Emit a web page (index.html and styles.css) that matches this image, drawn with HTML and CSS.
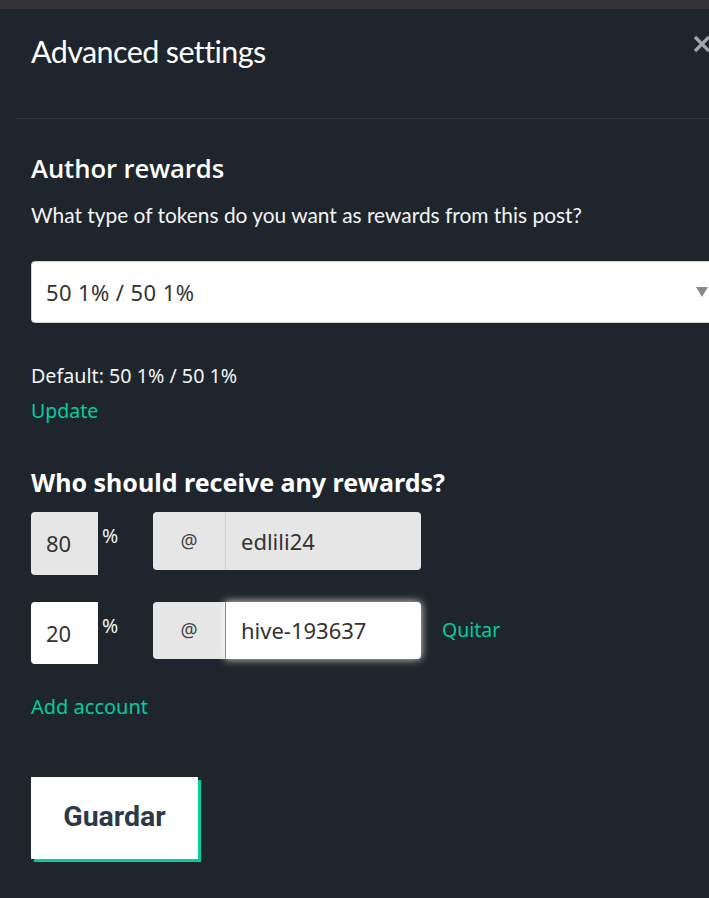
FILE: index.html
```html
<!DOCTYPE html>
<html lang="en">
<head>
<meta charset="utf-8">
<title>Advanced settings</title>
<link rel="stylesheet" href="styles.css">
</head>
<body>
<div class="topbar"></div>
<div class="modal">
  <div class="modal-header">
    <h2 class="modal-title">Advanced settings</h2>
    <button class="close-btn" aria-label="Close">
      <svg width="18" height="18" viewBox="0 0 18 18"><path d="M2 2 L16 16 M16 2 L2 16" stroke="#9ea8b0" stroke-width="3.2" stroke-linecap="butt" fill="none"/></svg>
    </button>
  </div>
  <div class="modal-body">
    <h3 class="section-title">Author rewards</h3>
    <p class="section-desc">What type of tokens do you want as rewards from this post?</p>
    <div class="select">
      <span class="select-value">50 1% / 50 1%</span>
      <span class="caret"></span>
    </div>
    <p class="default-text">Default: 50 1% / 50 1%</p>
    <a class="link update-link">Update</a>

    <h3 class="bene-title">Who should receive any rewards?</h3>
    <div class="bene-row">
      <div class="pct pct-disabled">80</div>
      <span class="pct-sign">%</span>
      <div class="acct acct-disabled">
        <span class="acct-at">@</span>
        <span class="acct-input">edlili24</span>
      </div>
    </div>
    <div class="bene-row">
      <div class="pct">20</div>
      <span class="pct-sign">%</span>
      <div class="acct acct-focused">
        <span class="acct-at">@</span>
        <span class="acct-input">hive-193637</span>
      </div>
      <a class="link remove-link">Quitar</a>
    </div>
    <a class="link add-link">Add account</a>

    <button class="save-btn">Guardar</button>
  </div>
</div>
</body>
</html>
```
FILE: styles.css
```css
html, body {
  margin: 0;
  padding: 0;
  overflow: hidden;
  background: #1e252d;
  height: 100%;
}

body {
  font-family: "Noto Sans", "Open Sans", sans-serif;
  color: #f4f4f4;
}

.topbar {
  height: 9px;
  background: #323437;
}

.modal {
  width: 740px;
}

.modal-header {
  margin-left: 15px;
  padding: 24px 0 49px 16px;
  border-bottom: 1px solid #2b3641;
  display: flex;
  justify-content: space-between;
  align-items: flex-start;
}

.modal-title {
  margin: 0;
  font-family: "Lato", sans-serif;
  font-weight: 400;
  font-size: 30.5px;
  line-height: 36px;
  letter-spacing: -0.6px;
  color: #ffffff;
}

.close-btn {
  margin: 2px 29px 0 0;
  padding: 0;
  border: 0;
  background: none;
  width: 18px;
  height: 18px;
  display: block;
}

.close-btn svg {
  display: block;
}

.modal-body {
  padding: 34px 0 0 31px;
}

.section-title {
  margin: 0 0 17px;
  font-family: "Open Sans", sans-serif;
  font-weight: 600;
  font-size: 25.7px;
  line-height: 32px;
  letter-spacing: -0.1px;
  color: #ffffff;
}

.section-desc {
  margin: 0;
  font-family: "Lato", sans-serif;
  font-size: 20.9px;
  line-height: 26px;
  color: #f4f4f4;
}

.select {
  margin-top: 33px;
  box-sizing: border-box;
  width: 690px;
  height: 62px;
  background: #ffffff;
  border: 1px solid #cfd3d6;
  border-radius: 4px;
  display: flex;
  align-items: center;
  justify-content: space-between;
  padding: 0 12px 0 14px;
}

.select-value {
  font-size: 22px;
  letter-spacing: 0.4px;
  color: #333333;
}

.caret {
  width: 0;
  height: 0;
  border-left: 6.5px solid transparent;
  border-right: 6.5px solid transparent;
  border-top: 10px solid #888888;
}

.default-text {
  margin: 40px 0 0;
  font-size: 19.7px;
  line-height: 26px;
  color: #f4f4f4;
}

.link {
  color: #05cc9f;
  text-decoration: none;
  cursor: pointer;
}

.update-link {
  display: block;
  margin-top: 9px;
  font-size: 19.5px;
  line-height: 26px;
}

.bene-title {
  margin: 42px 0 14px;
  font-weight: 700;
  font-size: 25px;
  line-height: 32px;
  color: #ffffff;
}

.bene-row {
  display: flex;
  align-items: flex-start;
  margin-bottom: 27px;
}

.pct {
  box-sizing: border-box;
  width: 67px;
  height: 62.5px;
  background: #ffffff;
  border-radius: 4px 0 0 4px;
  display: flex;
  align-items: center;
  padding-left: 15px;
  font-size: 22px;
  color: #333333;
}

.pct-disabled {
  background: #e6e6e6;
}

.pct-sign {
  margin: 11px 0 0 4px;
  width: 18px;
  font-size: 19.5px;
  line-height: 26px;
  color: #f4f4f4;
}

.acct {
  margin-left: 33px;
  width: 268px;
  height: 57.5px;
  display: flex;
  border-radius: 4px;
}

.acct-at {
  box-sizing: border-box;
  width: 72px;
  background: #e6e6e6;
  border-radius: 4px 0 0 4px;
  display: flex;
  align-items: center;
  justify-content: center;
  font-size: 19px;
  color: #444444;
}

.acct-input {
  box-sizing: border-box;
  flex: 1;
  display: flex;
  align-items: center;
  padding-left: 15px;
  border-radius: 0 4px 4px 0;
  font-size: 22px;
  color: #333333;
}

.acct-disabled .acct-input {
  background: #e6e6e6;
  border-left: 1px solid #d2d2d2;
}

.acct-focused .acct-input {
  background: #ffffff;
  border-left: 1px solid #8a8a8a;
  box-shadow: 0 0 8px rgba(255, 255, 255, 0.9);
}

.remove-link {
  margin: 15px 0 0 21px;
  font-size: 19.5px;
  line-height: 26px;
}

.add-link {
  display: block;
  margin-top: 30px;
  font-size: 20px;
  line-height: 26px;
}

.save-btn {
  display: flex;
  align-items: center;
  justify-content: center;
  margin-top: 57px;
  width: 167px;
  height: 82px;
  padding: 0 0 4px;
  border: 0;
  border-radius: 0;
  background: #ffffff;
  box-shadow: 3px 3px 0 #00cf9f;
  font-family: "Roboto", sans-serif;
  font-weight: 700;
  font-size: 28.5px;
  color: #2c3a47;
}
```
